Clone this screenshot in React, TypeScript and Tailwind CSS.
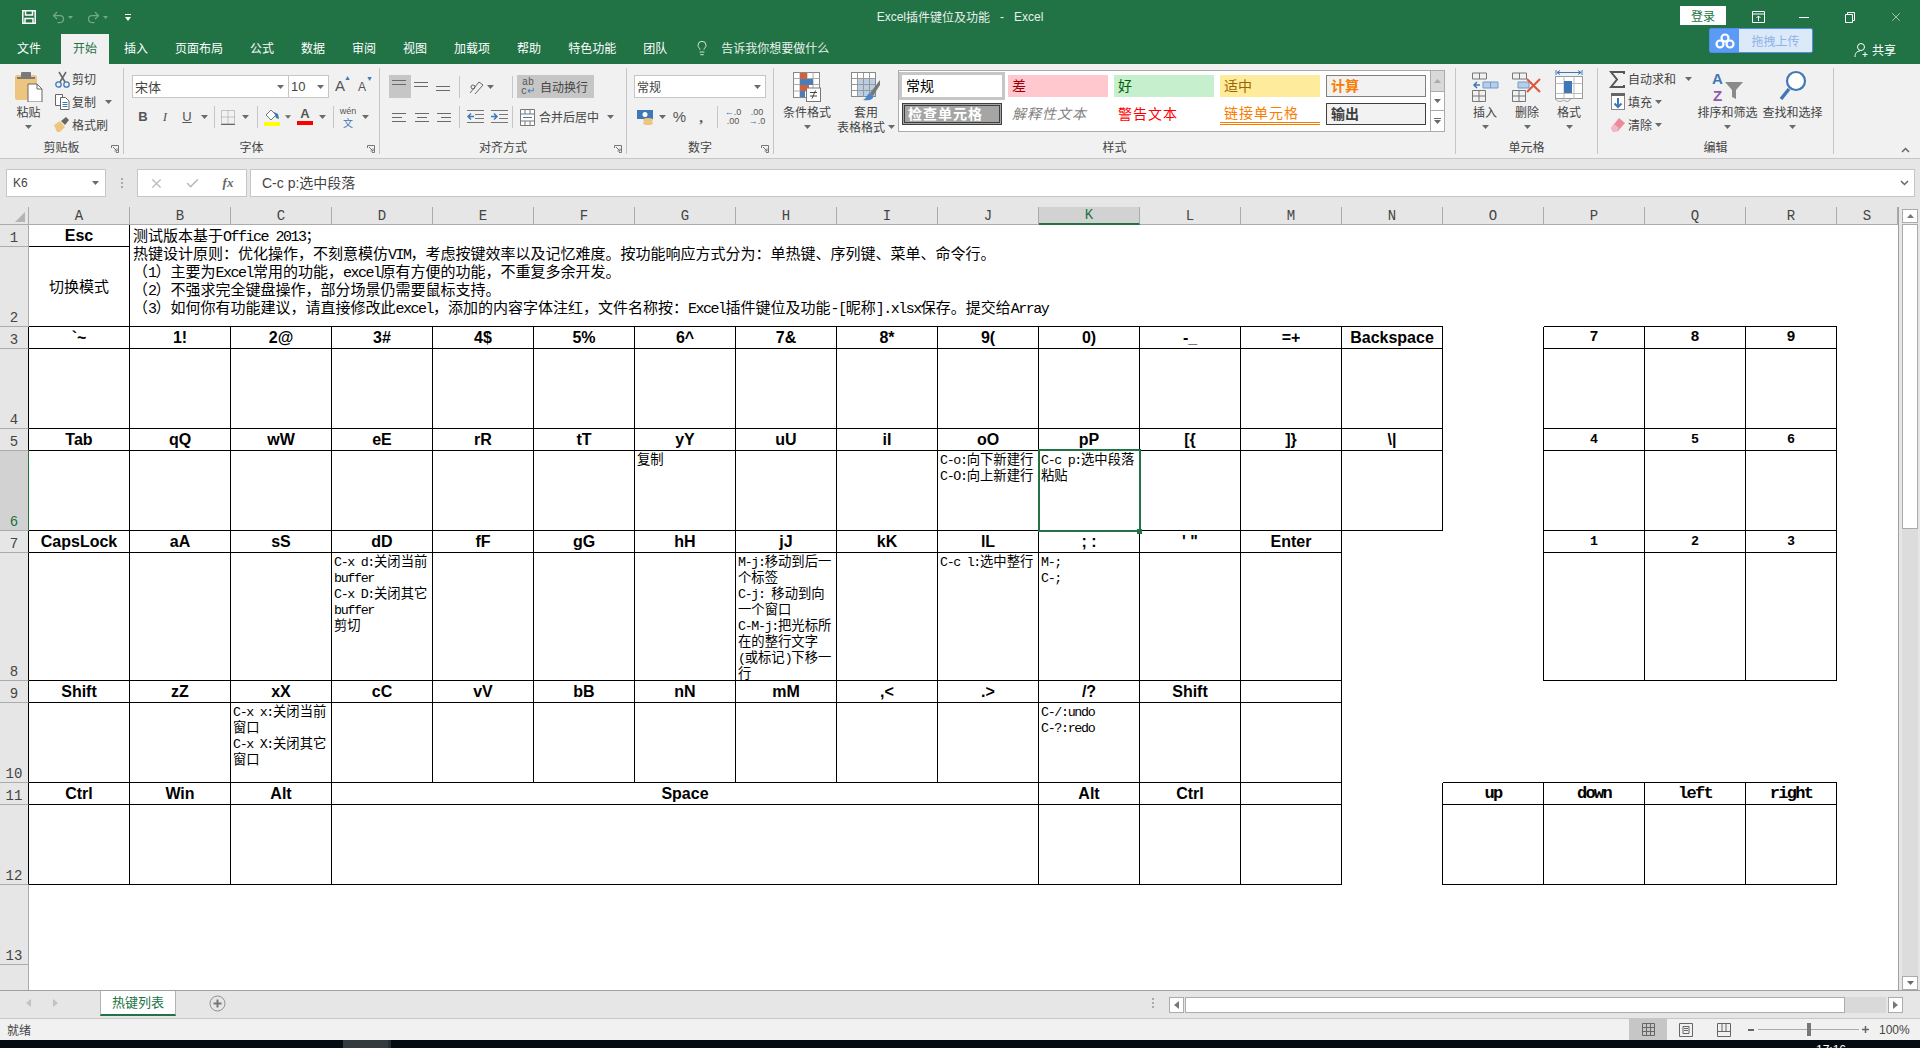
import React from "react";
import { Undo2, Redo2, X, Check, Lightbulb } from "lucide-react";

const Sim = ({ text }: { text: string }) => (
  <>
    {text.split(/([\x00-\x7f]+)/).map((part, i) =>
      /^[\x00-\x7f]+$/.test(part) ? (
        <span key={i} className="font-['Liberation_Mono',monospace] tracking-[-0.1em]">{part}</span>
      ) : (
        <span key={i}>{part}</span>
      )
    )}
  </>
);

const Caret = ({ w = "w-[7px]" }: { w?: string }) => (
  <div className={`${w} shrink-0 flex items-center justify-center`}>
    <svg width="7" height="4" viewBox="0 0 7 4"><path d="M0 0h7L3.500 4z" fill="#6a6a6a" /></svg>
  </div>
);
const Sep = () => <div className="w-px h-[22px] bg-[#c6c6c6] shrink-0" />;
const Launcher = () => (
  <svg className="absolute right-[4px] bottom-[1px]" width="8" height="8" viewBox="0 0 8 8" fill="none" stroke="#777">
    <path d="M.5 3V.5H7.500V7.500H5" /><path d="M2 2l4 4M6 3.500V6H3.500" />
  </svg>
);

const Group = ({ w, label, launcher, children }: { w: string; label: string; launcher?: boolean; children: React.ReactNode }) => (
  <div className={`${w} shrink-0 h-[86px] border-r border-[#c6c6c6] flex flex-col relative`}>
    <div className="h-[72px]">{children}</div>
    <div className="h-[14px] leading-[14px] text-center text-[12px] text-[#444]">{label}</div>
    {launcher && <Launcher />}
  </div>
);

const Big = ({ w, icon, lines, caretInline }: { w: string; icon: React.ReactNode; lines: string[]; caretInline?: boolean }) => (
  <div className={`${w} shrink-0 flex flex-col items-center pt-[4px] text-[12px] text-[#444] leading-[15px]`}>
    <div className="h-[30px] flex items-center justify-center">{icon}</div>
    <div className="mt-[2px] whitespace-nowrap">{lines[0]}</div>
    {lines[1] ? (
      <div className="whitespace-nowrap flex items-center gap-[3px]">{lines[1]}{caretInline && <Caret />}</div>
    ) : (
      <div className="mt-[6px]"><Caret /></div>
    )}
  </div>
);

const Lines = ({ widths, x }: { widths: number[]; x?: number[] }) => (
  <svg width="16" height="14" viewBox="0 0 16 14" stroke="#6a6a6a" strokeWidth="1">
    {widths.map((w, i) => (
      <path key={i} d={`M${x ? x[i] : 0} ${2.5 + i * 4}h${w}`} />
    ))}
  </svg>
);
const Slot = ({ w, children, cls = "" }: { w: string; children?: React.ReactNode; cls?: string }) => (
  <div className={`${w} h-[22px] shrink-0 flex items-center justify-center text-[#555] ${cls}`}>{children}</div>
);

const StyleCell = ({ cls, children }: { cls: string; children: React.ReactNode }) => (
  <div className={`w-[100px] h-[22px] mr-[6px] shrink-0 flex items-center text-[14px] leading-[20px] whitespace-nowrap box-border pl-[4px] pb-[2px] ${cls}`}>
    {children}
  </div>
);

const IconPaste = () => (
  <svg width="28" height="30" viewBox="0 0 28 30">
    <rect x="0" y="3" width="22" height="25" rx="2" fill="#eec57f" />
    <rect x="6" y="0" width="10" height="6" rx="1" fill="#7a7a7a" />
    <rect x="2" y="5" width="18" height="2" fill="#7a7a7a" />
    <path d="M13 12h9l5 5v13H13z" fill="#fff" stroke="#666" />
    <path d="M22 12v5h5" fill="none" stroke="#666" />
  </svg>
);
const IconCut = () => (
  <svg width="15" height="17" viewBox="0 0 15 17" fill="none">
    <path d="M4 1l6 10M11 1L5 11" stroke="#666" strokeWidth="1.500" />
    <circle cx="3.500" cy="13.500" r="2.700" stroke="#3f78b5" strokeWidth="1.300" />
    <circle cx="11.500" cy="13.500" r="2.700" stroke="#3f78b5" strokeWidth="1.300" />
  </svg>
);
const IconCopy = () => (
  <svg width="15" height="17" viewBox="0 0 15 17" fill="#fff" stroke="#666">
    <path d="M.5 1.500h7v11h-7z" /><path d="M5.500 4.500h5l3.500 3.500v8.500h-8.500z" />
    <path d="M7.500 9.500h5M7.500 11.500h5M7.500 13.500h5" stroke="#3f78b5" />
  </svg>
);
const IconBrush = () => (
  <svg width="16" height="15" viewBox="0 0 16 15">
    <path d="M0 8l6-4 5 6-5 5H3z" fill="#eec57f" />
    <path d="M7 4l5-4 3 3-4 5z" fill="#666" />
  </svg>
);
const IconCond = () => (
  <svg width="28" height="30" viewBox="0 0 28 30" fill="none">
    <rect x=".5" y=".5" width="26" height="25" fill="#fff" stroke="#888" />
    <path d="M7 .5v25M14 .5v25M20 .5v25M.5 6.500h26M.5 12.500h26M.5 19h26" stroke="#aaa" />
    <rect x="7" y="1" width="7" height="6" fill="#d1603d" />
    <rect x="7" y="7" width="13" height="6" fill="#4a7ebb" />
    <rect x="7" y="13" width="9" height="6" fill="#d1603d" />
    <rect x="7" y="19" width="5" height="6" fill="#4a7ebb" />
    <rect x="13.500" y="16" width="14" height="13.500" fill="#fff" stroke="#777" />
    <path d="M17 20.500h7M17 24h7M22.500 18.500l-3.500 8" stroke="#444" />
  </svg>
);
const IconTable = () => (
  <svg width="30" height="30" viewBox="0 0 30 30" fill="none">
    <rect x=".5" y=".5" width="24" height="24" fill="#fff" stroke="#888" />
    <rect x="7" y="7" width="17" height="17" fill="#b9cde5" />
    <path d="M6.500 .5v24M12.500 .5v24M18.500 .5v24M.5 6.500h24M.5 12.500h24M.5 18.500h24" stroke="#999" />
    <path d="M29 8L19 21l3 3L29 13z" fill="#777" />
    <path d="M19 21c-3 1-3 5-7 7 5 1 11 0 10-4z" fill="#4a86c5" />
  </svg>
);
const Grid2 = ({ x, y }: { x: number; y: number }) => (
  <path d={`M${x + .5} ${y + .5}h13v11h-13zM${x + 7} ${y + .5}v11M${x + .5} ${y + 6}h13`} stroke="#777" fill="none" />
);
const IconInsert = () => (
  <svg width="27" height="30" viewBox="0 0 27 30" fill="none">
    <path d="M.5 1h14v6h-14zM7.500 1v6" stroke="#777" />
    <path d="M11 10h15v6H11zM18.500 10v6" stroke="#6b9bd1" fill="#b9cde5" />
    <path d="M8 13H2M5 10l-3 3 3 3" stroke="#3f78b5" strokeWidth="1.500" />
    <Grid2 x={0} y={18} />
  </svg>
);
const IconDelete = () => (
  <svg width="30" height="30" viewBox="0 0 30 30" fill="none">
    <path d="M.5 1h14v6h-14zM7.500 1v6" stroke="#777" />
    <path d="M6 10h11v6H6z" stroke="#6b9bd1" fill="#b9cde5" />
    <Grid2 x={0} y={18} />
    <path d="M15 7l13 13M28 7L15 20" stroke="#e0553a" strokeWidth="2" />
  </svg>
);
const IconFormat = () => (
  <svg width="28" height="34" viewBox="0 0 28 34" fill="none">
    <path d="M1 0v5M27 0v5M2 2.500h24M5 .5l-3 2 3 2M23 .5l3 2-3 2" stroke="#3f78b5" />
    <rect x=".5" y="6.500" width="27" height="22" stroke="#999" fill="#fff" />
    <path d="M9 6.500v22M19 6.500v22M.5 13.500h27M.5 23.500h27" stroke="#bbb" />
    <rect x="9" y="11" width="8" height="12" fill="#3f78b5" />
    <path d="M.5 29c2 3 6 3 8 1 3 2 5 2 7-1" stroke="#999" />
  </svg>
);
const IconSort = () => (
  <svg width="32" height="32" viewBox="0 0 32 32">
    <text x="0" y="13" fontSize="15" fontWeight="700" fill="#3f78b5" fontFamily="Liberation Sans">A</text>
    <text x="1" y="30" fontSize="15" fontWeight="700" fill="#8e5aa8" fontFamily="Liberation Sans">Z</text>
    <path d="M13 11h18l-7 8v9l-4-2v-7z" fill="#8a8a8a" />
  </svg>
);
const IconFind = () => (
  <svg width="28" height="34" viewBox="0 0 28 34" fill="none">
    <circle cx="17" cy="11" r="9" stroke="#3f78b5" strokeWidth="2.200" fill="#fff" />
    <path d="M10 19L2 29" stroke="#3f78b5" strokeWidth="3.500" />
  </svg>
);

const clipRows: [string, React.ReactNode, boolean, string][] = [
  ["剪切", <IconCut key="a" />, false, "h-[22px]"],
  ["复制", <IconCopy key="b" />, true, "h-[23px]"],
  ["格式刷", <IconBrush key="c" />, false, "h-[23px]"],
];

const Ribbon = () => (
  <div className="h-[95px] shrink-0 bg-[#f1f1f1] border-b border-[#c6c6c6] pt-[4px] flex relative font-['Noto_Sans_CJK_SC',sans-serif] text-[12px] text-[#444]">
    <Group w="w-[124px]" label="剪贴板" launcher>
      <div className="flex">
        <div className="w-[52px] pl-[5px]"><Big w="w-[47px]" icon={<IconPaste />} lines={["粘贴"]} /></div>
        <div className="flex flex-col">
          {clipRows.map(([t, ic, c, h]) => (
            <div key={t} className={`${h} flex items-center`}>
              <div className="w-[20px] flex justify-center">{ic}</div>
              <span className="whitespace-nowrap">{t}</span>
              {c && <div className="ml-[9px]"><Caret /></div>}
            </div>
          ))}
        </div>
      </div>
    </Group>

    <Group w="w-[256px]" label="字体" launcher>
      <div className="pl-[8px] pt-[7px]">
        <div className="flex h-[23px] items-center">
          <div className="w-[157px] h-[23px] bg-white border border-[#c6c6c6] flex items-center justify-between pl-[2px] pr-[4px] text-[13px]">宋体<Caret /></div>
          <div className="w-[41px] -ml-px h-[23px] bg-white border border-[#c6c6c6] flex items-center justify-between pl-[2px] pr-[4px] text-[13px] font-['Liberation_Sans']">10<Caret /></div>
          <span className="ml-[6px] w-[23px] text-[15px] font-['Liberation_Sans'] relative text-[#555]">A<span className="absolute left-[9px] -top-[2px] text-[7px] text-[#3f78b5]">▲</span></span>
          <span className="w-[20px] text-[12px] font-['Liberation_Sans'] relative text-[#555]">A<span className="absolute left-[8px] -top-[4px] text-[7px] text-[#3f78b5]">▼</span></span>
        </div>
        <div className="flex h-[22px] items-center mt-[8px]">
          <Slot w="w-[22px]" cls="font-bold text-[13px] font-['Liberation_Sans']">B</Slot>
          <Slot w="w-[22px]" cls="italic text-[13px] font-['Liberation_Serif']">I</Slot>
          <Slot w="w-[22px]" cls="underline text-[13px] font-['Liberation_Sans']">U</Slot>
          <Caret w="w-[12px]" />
          <div className="w-[4px]" /><Sep />
          <Slot w="w-[26px]">
            <svg width="14" height="15" viewBox="0 0 14 15" fill="none" stroke="#999" strokeDasharray="1 1"><path d="M.5.5h13v13H.5zM7 .5v13M.5 7h13" /><path d="M0 14.500h14" stroke="#666" strokeDasharray="none" /></svg>
          </Slot>
          <Caret w="w-[8px]" />
          <div className="w-[8px]" /><Sep />
          <Slot w="w-[27px]">
            <svg width="16" height="18" viewBox="0 0 16 18"><path d="M2 7l5-5 5 5-5 5z" fill="#fff" stroke="#777" /><path d="M10 4l4 2 1 5-3-1z" fill="#3f78b5" /><rect y="14" width="16" height="4" fill="#ffff00" /></svg>
          </Slot>
          <Caret w="w-[6px]" />
          <Slot w="w-[28px]" cls="flex-col !justify-start">
            <span className="text-[13px] font-bold font-['Liberation_Sans'] leading-[15px]">A</span>
            <span className="w-[16px] h-[4px] bg-[#ff0000] block" />
          </Slot>
          <Caret />
          <div className="w-[7px]" /><Sep />
          <Slot w="w-[28px]" cls="flex-col leading-[11px]">
            <span className="text-[9px] font-['Liberation_Sans']">wén</span>
            <span className="text-[10px] text-[#3f78b5]">文</span>
          </Slot>
          <Caret />
        </div>
      </div>
    </Group>

    <Group w="w-[247px]" label="对齐方式" launcher>
      <div className="pl-[9px] pt-[7px]">
        <div className="flex h-[23px] items-center">
          <div className="w-[22px] h-[23px] bg-[#c6c6c6] flex justify-center pt-[3px]"><Lines widths={[14, 14]} /></div>
          <Slot w="w-[22px]"><Lines widths={[14, 14]} /></Slot>
          <Slot w="w-[22px]" cls="pt-[8px]"><Lines widths={[14, 14]} /></Slot>
          <div className="w-[4px]" /><Sep />
          <div className="w-[7px]" />
          <Slot w="w-[20px]">
            <svg width="16" height="16" viewBox="0 0 16 16" fill="none" stroke="#666"><path d="M1 14L10 3M6 15l8-9M10 3l4 3" /><circle cx="4" cy="8" r="2" /></svg>
          </Slot>
          <Caret />
          <div className="w-[18px]" /><Sep />
          <div className="w-[4px]" />
          <div className="w-[77px] h-[23px] bg-[#c6c6c6] flex items-center whitespace-nowrap">
            <span className="w-[22px] text-center text-[10px] leading-[9px] font-['Liberation_Mono'] text-[#555]">ab<br />c<span className="text-[#3f78b5]">↵</span></span>
            <span className="ml-[1px]">自动换行</span>
          </div>
        </div>
        <div className="flex h-[22px] items-center mt-[8px]">
          <Slot w="w-[22px]" cls="pt-[2px]"><Lines widths={[14, 10, 14, 10]} /></Slot>
          <Slot w="w-[22px]" cls="pt-[2px]"><Lines widths={[14, 10, 14, 10]} x={[1, 3, 1, 3]} /></Slot>
          <Slot w="w-[22px]" cls="pt-[2px]"><Lines widths={[14, 10, 14, 10]} x={[1, 5, 1, 5]} /></Slot>
          <div className="w-[4px]" /><Sep />
          <div className="w-[3px]" />
          <Slot w="w-[24px]">
            <svg width="17" height="14" viewBox="0 0 17 14" fill="none"><path d="M0 .5h17M8 4.500h9M8 8.500h9M0 12.500h17" stroke="#777" /><path d="M7 6.500H1M4 3.500l-3 3 3 3" stroke="#3f78b5" strokeWidth="1.500" /></svg>
          </Slot>
          <Slot w="w-[24px]">
            <svg width="17" height="14" viewBox="0 0 17 14" fill="none"><path d="M0 .5h17M8 4.500h9M8 8.500h9M0 12.500h17" stroke="#777" /><path d="M0 6.500h6M3 3.500l3 3-3 3" stroke="#3f78b5" strokeWidth="1.500" /></svg>
          </Slot>
          <div className="w-px" /><Sep />
          <div className="w-[4px]" />
          <Slot w="w-[20px]">
            <svg width="15" height="17" viewBox="0 0 15 17" fill="#fff" stroke="#777"><path d="M.5.5h14v16H.5zM.5 5h14M.5 12h14M5 .5V5M10 .5V5M5 12v4.500M10 12v4.500" /><path d="M3 8.500h9" stroke="#3f78b5" /></svg>
          </Slot>
          <span className="ml-[2px] whitespace-nowrap">合并后居中</span>
          <div className="ml-[8px]"><Caret /></div>
        </div>
      </div>
    </Group>

    <Group w="w-[147px]" label="数字" launcher>
      <div className="pl-[7px] pt-[7px]">
        <div className="w-[132px] h-[23px] bg-white border border-[#c6c6c6] flex items-center justify-between pl-[2px] pr-[4px]">常规<Caret /></div>
        <div className="flex h-[22px] items-center mt-[8px]">
          <Slot w="w-[24px]">
            <svg width="18" height="17" viewBox="0 0 18 17"><rect x="0" y="1" width="16" height="9" fill="#3f78b5" /><circle cx="8" cy="5.500" r="2.500" fill="#fff" /><ellipse cx="11" cy="11" rx="5" ry="2" fill="#eec57f" /><ellipse cx="11" cy="14" rx="5" ry="2" fill="#eec57f" /></svg>
          </Slot>
          <Caret w="w-[8px]" />
          <Slot w="w-[27px]" cls="text-[15px] font-['Liberation_Sans']">%</Slot>
          <Slot w="w-[16px]" cls="text-[15px] font-bold font-['Liberation_Serif']">,</Slot>
          <div className="w-[8px]" /><Sep />
          <div className="w-[3px]" />
          <Slot w="w-[24px]" cls="text-[9px] leading-[9px] font-['Liberation_Sans'] text-center"><span><span className="text-[#3f78b5]">←</span>.0<br />.00</span></Slot>
          <Slot w="w-[24px]" cls="text-[9px] leading-[9px] font-['Liberation_Sans'] text-center"><span>.00<br /><span className="text-[#3f78b5]">→</span>.0</span></Slot>
        </div>
      </div>
    </Group>

    <Group w="w-[682px]" label="样式">
      <div className="flex">
        <Big w="w-[66px]" icon={<IconCond />} lines={["条件格式"]} />
        <Big w="w-[52px]" icon={<IconTable />} lines={["套用", "表格格式"]} caretInline />
        <div className="ml-[6px] mt-[2px] w-[533px] h-[62px] box-border bg-white border border-[#ababab] pl-[3px] pt-[4px] font-['Noto_Sans_CJK_SC',serif]">
          <div className="flex">
            <StyleCell cls="outline-[3px] outline outline-[#c6c6c6] text-black">常规</StyleCell>
            <StyleCell cls="bg-[#ffc7ce] text-[#9c0006]">差</StyleCell>
            <StyleCell cls="bg-[#c6efce] text-[#006100]">好</StyleCell>
            <StyleCell cls="bg-[#ffeb9c] text-[#9c6500]">适中</StyleCell>
            <StyleCell cls="bg-[#f2f2f2] border border-[#7f7f7f] text-[#fa7d00] font-bold">计算</StyleCell>
          </div>
          <div className="flex mt-[6px]">
            <StyleCell cls="bg-[#a5a5a5] border-[3px] border-double border-[#3f3f3f] text-white font-bold !pl-[3px] tracking-[1px]">检查单元格</StyleCell>
            <StyleCell cls="italic text-[#7f7f7f] tracking-[1px]">解释性文本</StyleCell>
            <StyleCell cls="text-[#ff0000] tracking-[1px]">警告文本</StyleCell>
            <StyleCell cls="text-[#fa7d00] border-b-[3px] border-double border-[#fa7d00] tracking-[1px]">链接单元格</StyleCell>
            <StyleCell cls="bg-[#f2f2f2] border border-[#3f3f3f] text-[#3f3f3f] font-bold">输出</StyleCell>
          </div>
        </div>
        <div className="mt-[2px] w-[14px] h-[62px] flex flex-col border border-l-0 border-[#ababab]">
          <div className="h-[21px] bg-[#d9d9d9] border-b border-[#ababab] flex items-center justify-center"><svg width="7" height="4" viewBox="0 0 7 4"><path d="M3.500 0L7 4H0z" fill="#aaa" /></svg></div>
          <div className="h-[19px] bg-white border-b border-[#ababab] flex items-center justify-center"><Caret /></div>
          <div className="flex-1 bg-white flex flex-col items-center justify-center gap-[1px]"><div className="w-[7px] h-px bg-[#6a6a6a]" /><Caret /></div>
        </div>
      </div>
    </Group>

    <Group w="w-[142px]" label="单元格">
      <div className="flex pl-[8px]">
        <Big w="w-[42px]" icon={<IconInsert />} lines={["插入"]} />
        <Big w="w-[42px]" icon={<IconDelete />} lines={["删除"]} />
        <Big w="w-[42px]" icon={<IconFormat />} lines={["格式"]} />
      </div>
    </Group>

    <Group w="w-[236px]" label="编辑">
      <div className="flex">
        <div className="w-[97px] shrink-0 pl-[11px] flex flex-col">
          <div className="h-[22px] flex items-center">
            <div className="w-[19px]">
              <svg width="16" height="17" viewBox="0 0 16 17" fill="none"><path d="M15 3V1H2l6 7.500L2 16h13v-2" stroke="#555" strokeWidth="2" /></svg>
            </div>
            自动求和<div className="ml-[9px]"><Caret /></div>
          </div>
          <div className="h-[23px] flex items-center">
            <div className="w-[19px] pl-[2px]">
              <svg width="14" height="17" viewBox="0 0 14 17" fill="#fff" stroke="#888"><rect x=".5" y=".5" width="13" height="16" /><rect x="0" y="0" width="14" height="3" fill="#666" stroke="none" /><path d="M7 5v9M3.500 10.500L7 14l3.500-3.500" stroke="#3f78b5" strokeWidth="2" fill="none" /></svg>
            </div>
            填充<div className="ml-[3px]"><Caret /></div>
          </div>
          <div className="h-[23px] flex items-center">
            <div className="w-[19px] pl-[2px]">
              <svg width="14" height="14" viewBox="0 0 14 14"><path d="M8 0l6 5-7 8-5 1-2-4z" fill="#ec8a9c" /><path d="M0 10l3-4 5 4-2 3-4 1z" fill="#f4b8c3" /></svg>
            </div>
            清除<div className="ml-[3px]"><Caret /></div>
          </div>
        </div>
        <Big w="w-[65px]" icon={<IconSort />} lines={["排序和筛选"]} />
        <Big w="w-[65px]" icon={<IconFind />} lines={["查找和选择"]} />
      </div>
    </Group>

    <svg className="absolute right-[10px] bottom-[5px]" width="9" height="6" viewBox="0 0 9 6" fill="none" stroke="#666" strokeWidth="1.500"><path d="M1 5l3.500-3.500L8 5" /></svg>
  </div>
);

const Tabs = ["插入", "页面布局", "公式", "数据", "审阅", "视图", "加载项", "帮助", "特色功能", "团队"];

const TitleBar = () => (
  <div className="h-[34px] shrink-0 grid grid-cols-[1fr_auto_1fr] text-white font-['Noto_Sans_CJK_SC',sans-serif] text-[12px]">
    <div className="flex items-center pl-[22px]">
      <svg width="14" height="14" viewBox="0 0 14 14" fill="none" stroke="#fff" strokeWidth="1.500"><path d="M.8.8h12.400v12.400H.8zM3.500 1v4h7V1M3 13V8.500h8V13" /></svg>
      <Undo2 className="ml-[15px] text-[#75a78b]" size={15} strokeWidth={2} />
      <div className="ml-[2px]"><svg width="5" height="3" viewBox="0 0 5 3"><path d="M0 0h5L2.500 3z" fill="#75a78b" /></svg></div>
      <Redo2 className="ml-[13px] text-[#75a78b]" size={15} strokeWidth={2} />
      <div className="ml-[2px]"><svg width="5" height="3" viewBox="0 0 5 3"><path d="M0 0h5L2.500 3z" fill="#75a78b" /></svg></div>
      <svg className="ml-[17px]" width="6" height="7" viewBox="0 0 6 7" fill="#fff"><rect width="6" height="1" /><path d="M0 3h6L3 7z" /></svg>
    </div>
    <div className="flex items-center text-[#e8f0eb] whitespace-pre"><span className="font-['Liberation_Sans']">Excel</span>插件键位及功能<span className="font-['Liberation_Sans']">   -   Excel</span></div>
    <div className="flex justify-end pr-[1px]">
      <div className="mt-[6px] mr-[9px] w-[46px] h-[19px] bg-white text-[#217346] flex items-center justify-center">登录</div>
      <div className="w-[46px] flex items-center justify-center"><svg width="13" height="12" viewBox="0 0 13 12" fill="none" stroke="#fff"><path d="M.5.5h12v11H.5zM.5 3h12M6.500 10V5M4.500 7l2-2 2 2" /></svg></div>
      <div className="w-[46px] flex items-center justify-center"><div className="w-[10px] h-px bg-white" /></div>
      <div className="w-[46px] flex items-center justify-center"><svg width="10" height="11" viewBox="0 0 10 11" fill="none" stroke="#fff"><path d="M.5 2.500h7v8h-7zM2.500 2.500v-2h7v8h-2" /></svg></div>
      <div className="w-[46px] flex items-center justify-center"><X size={14} strokeWidth={1} className="text-white" /></div>
    </div>
  </div>
);

const TabRow = () => (
  <div className="h-[30px] shrink-0 flex text-white text-[12px] leading-[28px] font-['Noto_Sans_CJK_SC',sans-serif] relative">
    <div className="ml-[5px] w-[48px] text-center">文件</div>
    <div className="ml-[8px] w-[48px] text-center bg-[#f1f1f1] text-[#217346]">开始</div>
    {Tabs.map((t) => (
      <div key={t} className="ml-[3px] px-[12px] whitespace-nowrap">{t}</div>
    ))}
    <div className="ml-[15px] flex items-center h-[28px]">
      <Lightbulb size={16} strokeWidth={1.2} />
      <span className="ml-[11px] text-[#e8f0eb]">告诉我你想要做什么</span>
    </div>
    <div className="ml-auto mr-[24px] flex items-center h-[28px] mt-[2px]">
      <svg className="mr-[2px]" width="16" height="16" viewBox="0 0 16 16" fill="none" stroke="#fff"><circle cx="7" cy="5" r="3.500" /><path d="M1 15c0-4 2-6 5-6M11 10v5M8.500 12.500h5" /></svg>
      共享
    </div>
    <div className="absolute left-[1709px] -top-[6px] w-[104px] h-[25px] flex rounded-[2px] border border-[#4f8ef0] overflow-hidden">
      <div className="w-[29px] bg-[#5b9bf5] flex items-center justify-center">
        <svg width="20" height="16" viewBox="0 0 20 16" fill="none" stroke="#fff" strokeWidth="2.200"><circle cx="10" cy="5" r="3.500" /><circle cx="5" cy="11" r="3.500" /><circle cx="15" cy="11" r="3.500" /></svg>
      </div>
      <div className="flex-1 bg-[#dce9f8] text-[#8fb1ea] flex items-center justify-center text-[12px]">拖拽上传</div>
    </div>
  </div>
);

const FormulaBar = () => (
  <div className="h-[48px] shrink-0 bg-[#e6e6e6] flex pt-[10px] font-['Noto_Sans_CJK_SC',sans-serif]">
    <div className="ml-[6px] w-[100px] h-[28px] bg-white border border-[#c6c6c6] flex items-center justify-between pl-[6px] pr-[6px] text-[12px] text-[#444] font-['Liberation_Sans']">K6<Caret /></div>
    <div className="w-[31px] h-[28px] flex flex-col items-center justify-center gap-[2px]">
      <div className="w-[2px] h-[2px] bg-[#aaa]" /><div className="w-[2px] h-[2px] bg-[#aaa]" /><div className="w-[2px] h-[2px] bg-[#aaa]" />
    </div>
    <div className="w-[110px] h-[28px] bg-white border border-[#c6c6c6] flex items-center text-[#bbb]">
      <div className="w-[36px] flex justify-center"><X size={15} strokeWidth={2} /></div>
      <div className="w-[36px] flex justify-center"><Check size={15} strokeWidth={2.500} /></div>
      <div className="w-[36px] text-center text-[13px] italic font-bold font-['Liberation_Serif'] text-[#666]">fx</div>
    </div>
    <div className="ml-[3px] w-[1665px] h-[28px] bg-white border border-[#c6c6c6] flex items-center justify-between pl-[11px] pr-[5px] text-[14px] text-[#444]">
      <span><span className="font-['Liberation_Sans']">C-c p:</span>选中段落</span>
      <svg width="9" height="6" viewBox="0 0 9 6" fill="none" stroke="#666" strokeWidth="1.500"><path d="M1 1l3.500 3.500L8 1" /></svg>
    </div>
  </div>
);

const COLS = "ABCDEFGHIJKLMNOPQRS".split("");

const RowHead = ({ n, dark, sel }: { n?: number; dark?: boolean; sel?: boolean }) => (
  <td className={`p-0 align-bottom text-center text-[14px] leading-[16px] border-b border-r font-['Liberation_Mono',monospace] ${sel ? "bg-[#d2d2d2] text-[#217346] border-r-[#217346] border-b-[#ababab]" : `bg-[#e6e6e6] text-[#444] border-b-[#ababab] ${dark ? "border-r-black" : "border-r-[#ababab]"}`}`}>
    {n}
  </td>
);
const Key = ({ children, span = 1, cls = "" }: { children?: React.ReactNode; span?: number; cls?: string }) => (
  <td colSpan={span} className={`p-0 border-r border-b border-black text-center align-middle text-black text-[16px] leading-[20px] font-bold font-['Liberation_Sans',sans-serif] whitespace-nowrap ${cls}`}>
    {children}
  </td>
);
const PadKey = ({ children, cls }: { children: React.ReactNode; cls: string }) => (
  <td className={`p-0 border-r border-b border-black text-center align-middle text-black font-bold leading-[20px] font-['Liberation_Mono',monospace] ${cls}`}>{children}</td>
);
const CellLine = ({ text }: { text: string }) => (
  <div className="h-[16px]"><Sim text={text} /></div>
);
const Body = ({ lines, h, span = 1 }: { lines?: string[]; h: string; span?: number }) => (
  <td colSpan={span} className="p-0 border-r border-b border-black align-top">
    <div className={`${h} pl-[2px] text-[13.33px] leading-[16px] text-black whitespace-nowrap`}>
      {lines?.map((l, i) => <CellLine key={i} text={l} />)}
    </div>
  </td>
);
const Empty = ({ span = 1, cls = "", rowSpan = 1 }: { span?: number; cls?: string; rowSpan?: number }) => (
  <td colSpan={span} rowSpan={rowSpan} className={`p-0 ${cls}`} />
);

const row3 = ["`~", "1!", "2@", "3#", "4$", "5%", "6^", "7&", "8*", "9(", "0)", "-_", "=+", "Backspace"];
const row5 = ["Tab", "qQ", "wW", "eE", "rR", "tT", "yY", "uU", "iI", "oO", "pP", "[{", "]}", "\\|"];
const row7 = ["CapsLock", "aA", "sS", "dD", "fF", "gG", "hH", "jJ", "kK", "lL", "; :", "' \"", "Enter"];
const row9 = ["Shift", "zZ", "xX", "cC", "vV", "bB", "nN", "mM", ",<", ".>", "/?", "Shift", ""];

const row6: Record<number, string[]> = { 6: ["复制"], 9: ["C-o:向下新建行", "C-O:向上新建行"] };
const row8: Record<number, string[]> = {
  3: ["C-x d:关闭当前", "buffer", "C-x D:关闭其它", "buffer", "剪切"],
  7: ["M-j:移动到后一", "个标签", "C-j: 移动到向", "一个窗口", "C-M-j:把光标所", "在的整行文字", "(或标记)下移一", "行"],
  9: ["C-c l:选中整行"],
  10: ["M-;", "C-;"],
};
const row10: Record<number, string[]> = {
  2: ["C-x x:关闭当前", "窗口", "C-x X:关闭其它", "窗口"],
  10: ["C-/:undo", "C-?:redo"],
};
const intro = [
  "测试版本基于Office 2013；",
  "热键设计原则：优化操作，不刻意模仿VIM，考虑按键效率以及记忆难度。按功能响应方式分为：单热键、序列键、菜单、命令行。",
  "（1）主要为Excel常用的功能，excel原有方便的功能，不重复多余开发。",
  "（2）不强求完全键盘操作，部分场景仍需要鼠标支持。",
  "（3）如何你有功能建议，请直接修改此excel，添加的内容字体注红，文件名称按：Excel插件键位及功能-[昵称].xlsx保存。提交给Array",
];

const Sheet = () => (
  <table className="table-fixed border-separate border-spacing-0 w-[1898px] font-['Noto_Sans_CJK_SC',sans-serif]">
    <colgroup>
      <col className="w-[29px]" />
      {COLS.slice(0, 17).map((c) => <col key={c} className="w-[101px]" />)}
      <col className="w-[91px]" />
      <col className="w-[61px]" />
    </colgroup>
    <tbody>
      <tr className="h-[18px]">
        <td className="p-0 bg-[#e6e6e6] border-b border-r border-[#ababab] relative">
          <svg className="absolute right-[3px] bottom-[2px]" width="10" height="10" viewBox="0 0 10 10"><path d="M10 0v10H0z" fill="#b4b4b4" /></svg>
        </td>
        {COLS.map((c) => (
          <td key={c} className={`p-0 text-center text-[14px] leading-[16px] font-['Liberation_Mono',monospace] border-r border-[#ababab] ${c === "K" ? "bg-[#d2d2d2] text-[#217346] border-b-2 border-b-[#217346]" : "bg-[#e6e6e6] text-[#444] border-b border-b-[#ababab]"}`}>{c}</td>
        ))}
      </tr>
      <tr className="h-[22px]">
        <RowHead n={1} />
        <Key cls="text-[#1f3b57]">Esc</Key>
        <td colSpan={13} rowSpan={2} className="p-0 align-top border-b border-black">
          <div className="h-[101px] pt-px pl-[3px] text-[15px] leading-[18px] text-black whitespace-nowrap">
            {intro.map((l) => <div key={l} className="h-[18px]"><Sim text={l} /></div>)}
          </div>
        </td>
        <Empty span={5} />
      </tr>
      <tr className="h-[80px]">
        <RowHead n={2} />
        <td className="p-0 border-r border-b border-black text-center align-middle text-[15px] text-black">切换模式</td>
        <Empty />
        <Empty cls="border-b border-black" /><Empty cls="border-b border-black" /><Empty cls="border-b border-black" />
        <Empty />
      </tr>

      <tr className="h-[22px]">
        <RowHead n={3} dark />
        {row3.map((k) => <Key key={k}>{k}</Key>)}
        <Empty cls="border-r border-black" />
        {["7", "8", "9"].map((k) => <PadKey key={k} cls="text-[15px]">{k}</PadKey>)}
        <Empty />
      </tr>
      <tr className="h-[80px]">
        <RowHead n={4} dark />
        {row3.map((k) => <Body key={k} h="h-[79px]" />)}
        <Empty cls="border-r border-black" />
        <Body h="h-[79px]" /><Body h="h-[79px]" /><Body h="h-[79px]" />
        <Empty />
      </tr>

      <tr className="h-[22px]">
        <RowHead n={5} dark />
        {row5.map((k) => <Key key={k}>{k}</Key>)}
        <Empty cls="border-r border-black" />
        {["4", "5", "6"].map((k) => <PadKey key={k} cls="text-[13.33px]">{k}</PadKey>)}
        <Empty />
      </tr>
      <tr className="h-[80px]">
        <RowHead n={6} dark sel />
        {row5.map((k, i) =>
          i === 10 ? (
            <td key={k} className="p-0 border-r border-b border-black align-top relative">
              <div className="h-[79px] pl-[2px] text-[13.33px] leading-[16px] text-black whitespace-nowrap">
                <CellLine text="C-c p:选中段落" />
                <CellLine text="粘贴" />
              </div>
              <div className="absolute -left-px -top-[2px] w-[103px] h-[83px] border-2 border-[#217346]" />
              <div className="absolute -right-[3px] -bottom-[4px] w-[5px] h-[5px] bg-[#217346]" />
            </td>
          ) : (
            <Body key={k} h="h-[79px]" lines={row6[i]} />
          )
        )}
        <Empty cls="border-r border-black" />
        <Body h="h-[79px]" /><Body h="h-[79px]" /><Body h="h-[79px]" />
        <Empty />
      </tr>

      <tr className="h-[22px]">
        <RowHead n={7} dark />
        {row7.map((k) => <Key key={k}>{k}</Key>)}
        <Empty />
        <Empty cls="border-r border-black" />
        {["1", "2", "3"].map((k) => <PadKey key={k} cls="text-[13.33px]">{k}</PadKey>)}
        <Empty />
      </tr>
      <tr className="h-[128px]">
        <RowHead n={8} dark />
        {row7.map((k, i) => <Body key={k} h="h-[127px]" lines={row8[i]} />)}
        <Empty />
        <Empty cls="border-r border-black" />
        <Body h="h-[127px]" /><Body h="h-[127px]" /><Body h="h-[127px]" />
        <Empty />
      </tr>

      <tr className="h-[22px]">
        <RowHead n={9} dark />
        {row9.map((k, i) => <Key key={i}>{k}</Key>)}
        <Empty span={6} />
      </tr>
      <tr className="h-[80px]">
        <RowHead n={10} dark />
        {row9.map((k, i) => <Body key={i} h="h-[79px]" lines={row10[i]} />)}
        <Empty />
        <Empty cls="border-b border-black" /><Empty cls="border-b border-black" /><Empty cls="border-b border-black" /><Empty cls="border-b border-black" />
        <Empty />
      </tr>

      <tr className="h-[22px]">
        <RowHead n={11} dark />
        <Key>Ctrl</Key><Key>Win</Key><Key>Alt</Key><Key span={7}>Space</Key><Key>Alt</Key><Key>Ctrl</Key><Key />
        <Empty cls="border-r border-black" />
        {["up", "down", "left", "right"].map((k) => (
          <PadKey key={k} cls="text-[17px] tracking-[-0.1em]">{k}</PadKey>
        ))}
        <Empty />
      </tr>
      <tr className="h-[80px]">
        <RowHead n={12} dark />
        <Body h="h-[79px]" /><Body h="h-[79px]" /><Body h="h-[79px]" /><Body span={7} h="h-[79px]" /><Body h="h-[79px]" /><Body h="h-[79px]" /><Body h="h-[79px]" />
        <Empty cls="border-r border-black" />
        <Body h="h-[79px]" /><Body h="h-[79px]" /><Body h="h-[79px]" /><Body h="h-[79px]" />
        <Empty />
      </tr>
      <tr className="h-[80px]">
        <RowHead n={13} />
        <Empty span={19} />
      </tr>
      <tr className="h-[30px]">
        <td className="p-0 bg-[#e6e6e6] border-r border-[#ababab]" />
        <Empty span={19} />
      </tr>
    </tbody>
  </table>
);

const VScroll = () => (
  <div className="w-[21px] shrink-0 bg-[#e6e6e6] flex flex-col pt-[2px] pl-[3px]">
    <div className="w-[16px] h-[14px] bg-white border border-[#ababab] flex items-center justify-center">
      <svg width="7" height="4" viewBox="0 0 7 4"><path d="M3.500 0L7 4H0z" fill="#777" /></svg>
    </div>
    <div className="w-[16px] h-[305px] mt-px bg-white border border-[#ababab]" />
    <div className="w-[16px] flex-1 bg-[#dcdcdc]" />
    <div className="w-[16px] h-[14px] bg-white border border-[#ababab] flex items-center justify-center">
      <Caret />
    </div>
  </div>
);

const SheetTabs = () => (
  <div className="h-[28px] shrink-0 bg-[#e6e6e6] border-t border-[#a0a0a0] flex font-['Noto_Sans_CJK_SC',sans-serif] text-[13px]">
    <div className="w-[100px] flex items-center pl-[26px] gap-[22px] pb-[3px]">
      <svg width="5" height="8" viewBox="0 0 5 8"><path d="M5 0v8L0 4z" fill="#c2c2c2" /></svg>
      <svg width="5" height="8" viewBox="0 0 5 8"><path d="M0 0v8l5-4z" fill="#c2c2c2" /></svg>
    </div>
    <div className="w-[76px] h-[25px] bg-white border-x border-b-2 border-x-[#b4b4b4] border-b-[#217346] text-[#217346] text-center leading-[22px]">热键列表</div>
    <div className="ml-[33px] flex items-center pb-[3px]">
      <svg width="17" height="17" viewBox="0 0 17 17" fill="none"><circle cx="8.500" cy="8.500" r="7.500" stroke="#909090" /><path d="M8.500 4.500v8M4.500 8.500h8" stroke="#777" strokeWidth="2" /></svg>
    </div>
    <div className="ml-[926px] w-[3px] flex flex-col justify-center gap-[2px] pb-[3px]">
      <div className="w-[2px] h-[2px] bg-[#aaa]" /><div className="w-[2px] h-[2px] bg-[#aaa]" /><div className="w-[2px] h-[2px] bg-[#aaa]" />
    </div>
    <div className="ml-[14px] mt-[6px] h-[16px] flex">
      <div className="w-[15px] bg-white border border-[#ababab] flex items-center justify-center">
        <svg width="5" height="8" viewBox="0 0 5 8"><path d="M5 0v8L0 4z" fill="#777" /></svg>
      </div>
      <div className="w-[660px] ml-px bg-white border border-[#ababab]" />
      <div className="w-[41px] bg-[#d9d9d9]" />
      <div className="ml-[2px] w-[15px] bg-white border border-[#ababab] flex items-center justify-center">
        <svg width="5" height="8" viewBox="0 0 5 8"><path d="M0 0v8l5-4z" fill="#777" /></svg>
      </div>
    </div>
  </div>
);

const StatusBar = () => (
  <div className="h-[22px] shrink-0 bg-[#f1f1f1] border-t border-[#c6c6c6] flex items-center pl-[7px] font-['Noto_Sans_CJK_SC',sans-serif] text-[12px] text-[#444]">
    就绪
    <div className="ml-auto flex items-center h-full">
      <div className="w-[38px] h-full bg-[#c6c6c6] flex items-center justify-center">
        <svg width="13" height="13" viewBox="0 0 13 13" fill="none" stroke="#666"><path d="M.5.5h12v12H.5zM4.500.5v12M8.500.5v12M.5 4.500h12M.5 8.500h12" /></svg>
      </div>
      <div className="w-[38px] flex justify-center">
        <svg width="14" height="14" viewBox="0 0 14 14" fill="none" stroke="#666"><path d="M.5.5h13v13H.5zM4 3.500h6v7H4zM5 5.500h4M5 7.500h4" /></svg>
      </div>
      <div className="w-[38px] flex justify-center">
        <svg width="14" height="14" viewBox="0 0 14 14" fill="none" stroke="#666"><path d="M.5.5h13v13H.5zM.5 8.500h13M5 .5v8M9 .5v8" /></svg>
      </div>
      <div className="w-[6px] h-[2px] bg-[#666] ml-[5px]" />
      <div className="ml-[4px] w-[101px] h-px bg-[#aaa] relative">
        <div className="absolute left-[49px] -top-[6px] w-[4px] h-[13px] bg-[#777]" />
      </div>
      <svg className="ml-[3px]" width="7" height="7" viewBox="0 0 7 7" stroke="#666" strokeWidth="1.500"><path d="M3.500 0v7M0 3.500h7" /></svg>
      <span className="ml-[10px] mr-[8px] w-[33px] font-['Liberation_Sans']">100%</span>
    </div>
  </div>
);

const TaskBar = () => (
  <div className="h-[8px] shrink-0 bg-[#030c12] flex overflow-hidden relative">
    <div className="ml-[343px] w-[45px] bg-[#333b3f]" />
    <div className="w-[3px] bg-[#262d30]" />
    <div className="ml-auto mr-[74px] pt-[3px] text-[12px] leading-[14px] text-white font-['Liberation_Sans']">17:16</div>
  </div>
);

export default function App() {
  return (
    <div className="w-[1920px] h-[1048px] overflow-hidden flex flex-col bg-[#217346]">
      <TitleBar />
      <TabRow />
      <Ribbon />
      <FormulaBar />
      <div className="h-[783px] shrink-0 flex bg-white">
        <div className="w-[1899px] shrink-0 overflow-hidden border-r border-[#a0a0a0] box-border">
          <Sheet />
        </div>
        <VScroll />
      </div>
      <SheetTabs />
      <StatusBar />
      <TaskBar />
    </div>
  );
}
